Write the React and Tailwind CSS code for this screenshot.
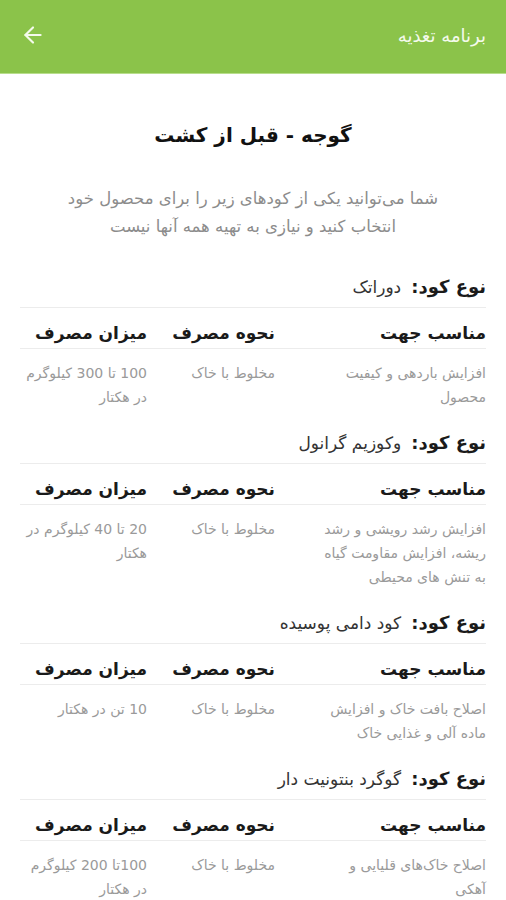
import React from "react";
import { ArrowLeft } from "lucide-react";

const sections = [
  {
    type: "دوراتک",
    purpose: "افزایش باردهی و کیفیت محصول",
    method: "مخلوط با خاک",
    amount: "100 تا 300 کیلوگرم در هکتار",
  },
  {
    type: "وکوزیم گرانول",
    purpose: "افزایش رشد رویشی و رشد ریشه، افزایش مقاومت گیاه به تنش های محیطی",
    method: "مخلوط با خاک",
    amount: "20 تا 40 کیلوگرم در هکتار",
  },
  {
    type: "کود دامی پوسیده",
    purpose: "اصلاح بافت خاک و افزایش ماده آلی و غذایی خاک",
    method: "مخلوط با خاک",
    amount: "10 تن در هکتار",
  },
  {
    type: "گوگرد بنتونیت دار",
    purpose: "اصلاح خاک‌های قلیایی و آهکی",
    method: "مخلوط با خاک",
    amount: "100تا 200 کیلوگرم در هکتار",
  },
];

function Section({ s }) {
  return (
    <div className="flex flex-col">
      <div className="flex items-center gap-[10px] pb-[8px] border-b border-[#ececec] leading-6">
        <span className="text-[18px] font-bold text-[#1a1a1a]">نوع کود:</span>
        <span className="text-[17px] text-[#333]">{s.type}</span>
      </div>
      <div className="grid grid-cols-[211px_128px_125px] border-b border-[#ececec] pt-[13px] pb-[3px] leading-6">
        <div className="text-[17px] font-bold text-[#1a1a1a]">مناسب جهت</div>
        <div className="text-[17px] font-bold text-[#1a1a1a] whitespace-nowrap">نحوه مصرف</div>
        <div className="text-[17px] font-bold text-[#1a1a1a] whitespace-nowrap">میزان مصرف</div>
      </div>
      <div className="grid grid-cols-[211px_128px_125px] pt-[12px] text-[14px] leading-6 text-[#9a9a9a]">
        <div className="pl-[43px]">{s.purpose}</div>
        <div className="whitespace-nowrap">{s.method}</div>
        <div>{s.amount}</div>
      </div>
    </div>
  );
}

export default function App() {
  return (
    <div
      dir="rtl"
      className="w-[506px] min-h-[900px] bg-white"
      style={{ fontFamily: '"DejaVu Sans", sans-serif' }}
    >
      <div className="h-[73px] bg-[#8bc34a] flex items-center justify-between px-[20px] shadow-[0_1px_0_#b8de8c]">
        <span className="text-[18px] text-[#f4faec] pb-[2px]">برنامه تغذیه</span>
        <ArrowLeft className="w-[26px] h-[26px] text-[#f4faec] -mt-[4px]" strokeWidth={2} />
      </div>
      <div className="pt-[46px] text-center text-[20px] font-bold text-[#111] leading-8">
        گوجه - قبل از کشت
      </div>
      <div className="pt-[34px] px-[44px] text-center text-[16.5px] leading-7 text-[#8c8c8c]">
        شما می‌توانید یکی از کودهای زیر را برای محصول خود انتخاب کنید و نیازی به تهیه همه آنها نیست
      </div>
      <div className="px-[20px] pt-[34px] flex flex-col gap-[22px]">
        {sections.map((s, i) => (
          <Section key={i} s={s} />
        ))}
      </div>
    </div>
  );
}
